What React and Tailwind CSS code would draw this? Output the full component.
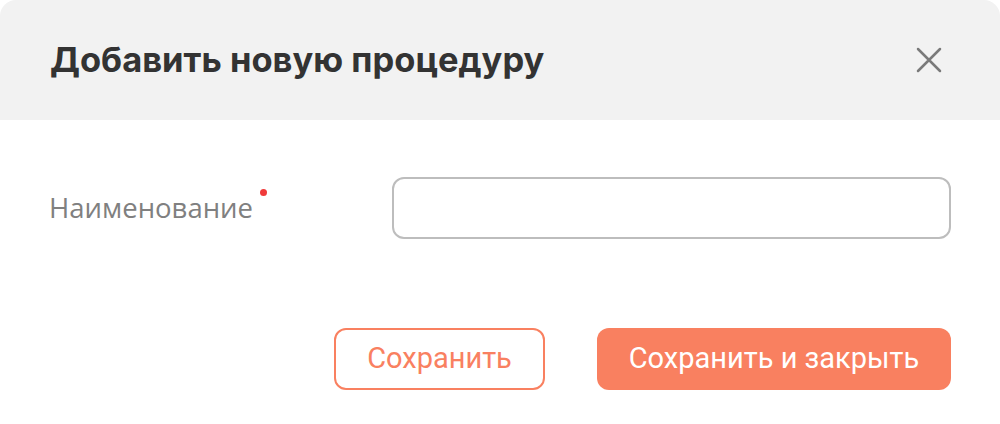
import React from 'react'

const CloseIcon = () => (
    <svg width="26" height="26" viewBox="0 0 26 26" fill="none">
        <path d="M2 2L24 24M24 2L2 24" stroke="#7a7a7a" strokeWidth="2.5" strokeLinecap="round" />
    </svg>
);

const App = () => {
    return (
        <div className="w-[1000px] h-[424px] bg-white overflow-hidden">
            <div className="h-[120px] bg-[#f2f2f2] rounded-t-[16px] flex items-center justify-between pl-[50px] pr-[58px]">
                <h2 className="text-[34.5px] font-bold text-[#333333] font-['Inter',sans-serif]">
                    Добавить новую процедуру
                </h2>
                <button className="w-[26px] h-[26px] flex items-center justify-center">
                    <CloseIcon />
                </button>
            </div>

            <div className="px-[49px] pt-[57px] flex items-center">
                <label className="w-[343px] text-[27.5px] text-[#808080] font-['Open_Sans',sans-serif] leading-none">
                    <span className="relative">
                        Наименование
                        <span className="absolute -right-[14px] top-0 w-[7px] h-[7px] rounded-full bg-[#f03a3a]"></span>
                    </span>
                </label>
                <input
                    type="text"
                    className="w-[559px] h-[62px] border-2 border-[#bdbdbd] rounded-[12px] outline-none px-4 text-[20px]"
                />
            </div>

            <div className="flex justify-end gap-[52px] pr-[49px] pt-[89px]">
                <button className="w-[211px] h-[62px] border-2 border-[#f98060] rounded-[12px] text-[29px] text-[#f98060] font-['Roboto',sans-serif]">
                    Сохранить
                </button>
                <button className="w-[354px] h-[62px] bg-[#f98060] rounded-[12px] text-[29px] text-white font-['Roboto',sans-serif]">
                    Сохранить и закрыть
                </button>
            </div>
        </div>
    )
}

export default App
